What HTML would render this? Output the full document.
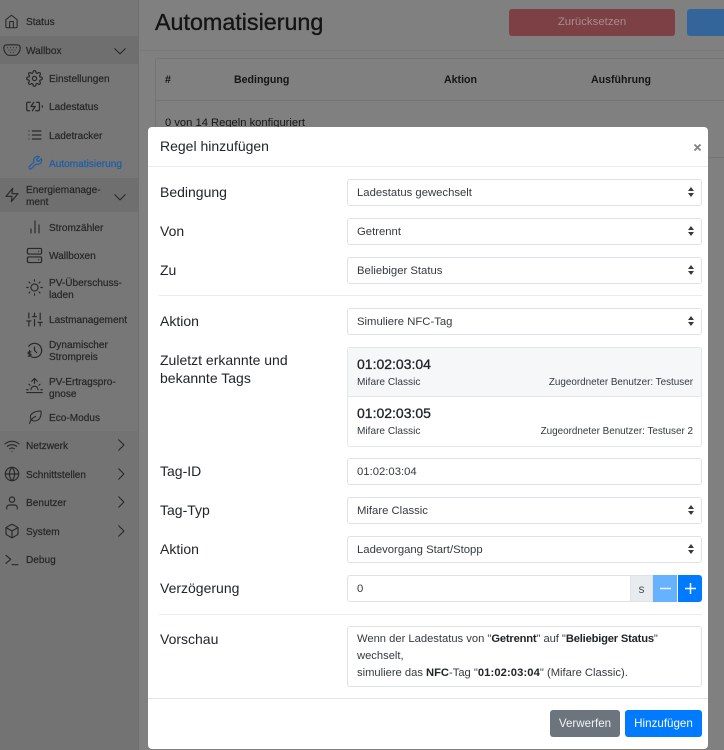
<!DOCTYPE html>
<html lang="de"><head><meta charset="utf-8"><title>Automatisierung</title>
<style>
*{box-sizing:border-box}
html,body{margin:0;padding:0;width:724px;height:750px;overflow:hidden;background:#808080;font-family:"Liberation Sans",sans-serif;color:#212529}
.a{position:absolute}
.t{position:absolute;white-space:nowrap}
#side{left:0;top:0;width:139px;height:750px;background:#777;border-right:1px solid #6e6e6e}
.g{position:absolute;left:0;width:138px;background:#6f6f6f}
.s{position:absolute;font-size:10.100px;line-height:12px;color:#262626;white-space:nowrap;-webkit-text-stroke:.2px #262626}
.m{left:26px}.n{left:49px}
svg.i{position:absolute;fill:none;stroke:#282828;stroke-width:1.700;stroke-linecap:round;stroke-linejoin:round}
svg.c{position:absolute;fill:none;stroke:#262626;stroke-width:1.800;stroke-linecap:round;stroke-linejoin:round}
#modal{left:148px;top:127px;width:560px;height:622px;background:#fff;border-radius:4px}
.l{position:absolute;left:160px;font-size:14px;line-height:18px;color:#212529;white-space:nowrap}
.f{position:absolute;left:347px;width:355px;height:27px;background:#fff;border:1px solid #dee2e6;border-radius:3px;font-size:11.300px;line-height:27px;padding-left:9px;color:#343a40;white-space:nowrap}
.f svg{position:absolute;right:7px;top:7px}
.hr{position:absolute;left:159px;width:543px;height:1px;background:#e9ecef}
.b{position:absolute;text-align:center;border-radius:3px;font-size:11.600px;color:#f2f2f2}
.p b{color:#212529}
</style></head><body>
<div class="a" id="side"></div>
<div class="g" style="top:36px;height:28px"></div>
<div class="g" style="top:178px;height:34px"></div>
<div class="g" style="top:431px;height:319px;background:#737373"></div>

<svg class="i" style="left:4px;top:14px" width="15" height="15" viewBox="0 0 24 24"><path d="M3 9l9-7 9 7v11a2 2 0 0 1-2 2H5a2 2 0 0 1-2-2z"/><path d="M9 22V12h6v10"/></svg>
<div class="s m" style="top:17px">Status</div>
<svg class="i" style="left:3px;top:43px;stroke-width:1.500" width="18" height="14" viewBox="0 0 24 18"><path d="M5 2h14c2 0 4 1.500 4 4 0 4-3 10-7 10H8C4 16 1 10 1 6c0-2.500 2-4 4-4z"/><path d="M6 6h.01M10 6h.01M14 6h.01M18 6h.01M8 9h.01M12 9h.01M16 9h.01M10 12h.01M14 12h.01"/></svg>
<div class="s m" style="top:46px">Wallbox</div>
<svg class="c" style="left:113px;top:44px" width="14" height="14" viewBox="0 0 24 24"><path d="M3 8l9 9 9-9"/></svg>

<svg class="i" style="left:26px;top:70px" width="17" height="17" viewBox="0 0 24 24"><circle cx="12" cy="12" r="3"/><path d="M19.400 15a1.650 1.650 0 0 0 .33 1.820l.06.06a2 2 0 1 1-2.830 2.830l-.06-.06a1.650 1.650 0 0 0-2.900 1.170V21a2 2 0 1 1-4 0v-.09A1.650 1.650 0 0 0 7.100 19.700l-.06.06a2 2 0 1 1-2.830-2.830l.06-.06a1.650 1.650 0 0 0-1.170-2.900H3a2 2 0 1 1 0-4h.09A1.650 1.650 0 0 0 4.300 7.100l-.06-.06a2 2 0 1 1 2.830-2.830l.06.06a1.650 1.650 0 0 0 2.900-1.170V3a2 2 0 1 1 4 0v.09a1.650 1.650 0 0 0 2.900 1.170l.06-.06a2 2 0 1 1 2.830 2.830l-.06.06a1.650 1.650 0 0 0 1.170 2.900H21a2 2 0 1 1 0 4h-.09a1.650 1.650 0 0 0-1.510 1z"/></svg>
<div class="s n" style="top:74px">Einstellungen</div>
<svg class="i" style="left:26px;top:98px" width="17" height="17" viewBox="0 0 24 24"><path d="M5 18H3a2 2 0 0 1-2-2V8a2 2 0 0 1 2-2h3.200M15 6h2a2 2 0 0 1 2 2v8a2 2 0 0 1-2 2h-3.200"/><path d="M23 13v-2"/><path d="M11 6l-4 6h6l-4 6"/></svg>
<div class="s n" style="top:102px">Ladestatus</div>
<svg class="i" style="left:27px;top:127px" width="16" height="16" viewBox="0 0 24 24"><path d="M8 6h13M8 12h13M8 18h13M3 6h.01M3 12h.01M3 18h.01"/></svg>
<div class="s n" style="top:131px">Ladetracker</div>
<svg class="i" style="left:27px;top:155px;stroke:#1c5ea6" width="16" height="16" viewBox="0 0 24 24"><path d="M14.700 6.300a1 1 0 0 0 0 1.400l1.600 1.600a1 1 0 0 0 1.400 0l3.770-3.770a6 6 0 0 1-7.940 7.940l-6.910 6.910a2.120 2.120 0 0 1-3-3l6.910-6.910a6 6 0 0 1 7.940-7.940l-3.760 3.760z"/></svg>
<div class="s n" style="top:159px;color:#1c5ea6;-webkit-text-stroke:.2px #1c5ea6">Automatisierung</div>

<svg class="i" style="left:4px;top:187px" width="16" height="16" viewBox="0 0 24 24"><path d="M13 2L3 14h9l-1 8 10-12h-9l1-8z"/></svg>
<div class="s m" style="top:185px">Energiemanage-<br>ment</div>
<svg class="c" style="left:113px;top:190px" width="14" height="14" viewBox="0 0 24 24"><path d="M3 8l9 9 9-9"/></svg>

<svg class="i" style="left:27px;top:219px" width="16" height="16" viewBox="0 0 24 24"><path d="M6 21v-6M12 21V3M18 21V9"/></svg>
<div class="s n" style="top:223px">Stromzähler</div>
<svg class="i" style="left:26px;top:247px" width="17" height="17" viewBox="0 0 24 24"><rect x="2" y="2" width="20" height="8" rx="2"/><rect x="2" y="14" width="20" height="8" rx="2"/><path d="M18 6h.01M18 18h.01"/></svg>
<div class="s n" style="top:251px">Wallboxen</div>
<svg class="i" style="left:26px;top:279px;stroke-width:1.600" width="17" height="17" viewBox="0 0 24 24"><circle cx="12" cy="12" r="5"/><path d="M12 1v2M12 21v2M4.220 4.220l1.420 1.420M18.360 18.360l1.420 1.420M1 12h2M21 12h2M4.220 19.780l1.420-1.420M18.360 5.640l1.420-1.420"/></svg>
<div class="s n" style="top:278px">PV-Überschuss-<br>laden</div>
<svg class="i" style="left:26px;top:311px" width="17" height="17" viewBox="0 0 24 24"><path d="M4 21v-7M4 10V3M12 21v-9M12 8V3M20 21v-5M20 12V3M1 14h6M9 8h6M17 16h6"/></svg>
<div class="s n" style="top:315px">Lastmanagement</div>
<svg class="i" style="left:26px;top:342px" width="17" height="17" viewBox="0 0 24 24"><path d="M4 6a10 10 0 1 1 4 15"/><path d="M12 7v5l3 3"/><path d="M5 12v8M7 14H4.500a1.500 1.500 0 0 0 0 3h1a1.500 1.500 0 0 1 0 3H3"/></svg>
<div class="s n" style="top:340px">Dynamischer<br>Strompreis</div>
<svg class="i" style="left:26px;top:377px;stroke-width:1.600" width="17" height="17" viewBox="0 0 24 24"><path d="M17 18a5 5 0 0 0-10 0M12 9V2M4.220 10.220l1.420 1.420M1 18h2M21 18h2M18.360 11.640l1.420-1.420M23 22H1M8 6l4-4 4 4"/></svg>
<div class="s n" style="top:377px">PV-Ertragspro-<br>gnose</div>
<svg class="i" style="left:27px;top:409px;stroke-width:1.600" width="16" height="16" viewBox="0 0 24 24"><path d="M4 22c0-4 4-9 9-11"/><path d="M21 3c1 9-3 15-10 15-3 0-6-2-6-6 0-6 8-9 16-9z"/></svg>
<div class="s n" style="top:413px">Eco-Modus</div>

<svg class="i" style="left:4px;top:438px" width="16" height="16" viewBox="0 0 24 24"><path d="M5 12.550a11 11 0 0 1 14.080 0M1.420 9a16 16 0 0 1 21.160 0M8.530 16.110a6 6 0 0 1 6.950 0M12 20h.01"/></svg>
<div class="s m" style="top:441px">Netzwerk</div>
<svg class="c" style="left:114px;top:438px" width="14" height="14" viewBox="0 0 24 24"><path d="M8 3l9 9-9 9"/></svg>
<svg class="i" style="left:4px;top:466px" width="16" height="16" viewBox="0 0 24 24"><circle cx="12" cy="12" r="10"/><path d="M2 12h20M12 2a15.300 15.300 0 0 1 4 10 15.300 15.300 0 0 1-4 10 15.300 15.300 0 0 1-4-10 15.300 15.300 0 0 1 4-10z"/></svg>
<div class="s m" style="top:470px">Schnittstellen</div>
<svg class="c" style="left:114px;top:467px" width="14" height="14" viewBox="0 0 24 24"><path d="M8 3l9 9-9 9"/></svg>
<svg class="i" style="left:4px;top:495px" width="16" height="16" viewBox="0 0 24 24"><path d="M20 21v-2a4 4 0 0 0-4-4H8a4 4 0 0 0-4 4v2"/><circle cx="12" cy="7" r="4"/></svg>
<div class="s m" style="top:498px">Benutzer</div>
<svg class="c" style="left:114px;top:495px" width="14" height="14" viewBox="0 0 24 24"><path d="M8 3l9 9-9 9"/></svg>
<svg class="i" style="left:4px;top:523px" width="16" height="16" viewBox="0 0 24 24"><path d="M21 16V8a2 2 0 0 0-1-1.730l-7-4a2 2 0 0 0-2 0l-7 4A2 2 0 0 0 3 8v8a2 2 0 0 0 1 1.730l7 4a2 2 0 0 0 2 0l7-4A2 2 0 0 0 21 16z"/><path d="M3.270 6.960L12 12.010l8.730-5.050M12 22.080V12"/></svg>
<div class="s m" style="top:527px">System</div>
<svg class="c" style="left:114px;top:524px" width="14" height="14" viewBox="0 0 24 24"><path d="M8 3l9 9-9 9"/></svg>
<svg class="i" style="left:4px;top:552px" width="16" height="16" viewBox="0 0 24 24"><path d="M3 17l7-6-7-6M12 19h9"/></svg>
<div class="s m" style="top:555px">Debug</div>

<div class="t" style="left:155px;top:8px;font-size:23.300px;line-height:28px;color:#141414;-webkit-text-stroke:.35px #141414">Automatisierung</div>
<div class="a" style="left:139px;top:50px;width:585px;height:1px;background:#797979"></div>
<div class="a" style="left:509px;top:9px;width:166px;height:27px;background:#7c4045;border-radius:3px;color:#a98c8e;font-size:11.400px;line-height:27px;text-align:center">Zurücksetzen</div>
<div class="a" style="left:687px;top:9px;width:50px;height:27px;background:#33659b;border-radius:3px"></div>
<div class="a" style="left:155px;top:58px;width:569px;height:100px;border:1px solid #747474;border-right:0;border-radius:3px 0 0 3px"></div>
<div class="a" style="left:155px;top:100px;width:569px;height:1px;background:#747474"></div>
<div class="t" style="left:165px;top:74px;font-size:10.600px;line-height:13px;font-weight:bold;color:#151515">#</div>
<div class="t" style="left:234px;top:74px;font-size:10.600px;line-height:13px;font-weight:bold;color:#151515">Bedingung</div>
<div class="t" style="left:444px;top:74px;font-size:10.600px;line-height:13px;font-weight:bold;color:#151515">Aktion</div>
<div class="t" style="left:591px;top:74px;font-size:10.600px;line-height:13px;font-weight:bold;color:#151515">Ausführung</div>
<div class="t" style="left:165px;top:117px;font-size:11.200px;line-height:13px;color:#151515">0 von 14 Regeln konfiguriert</div>

<div class="a" id="modal"></div>
<div class="t" style="left:160px;top:137px;font-size:14px;line-height:18px;color:#212529">Regel hinzufügen</div>
<svg class="a" style="left:693px;top:143px" width="9" height="9" viewBox="0 0 9 9"><path d="M1.500 1.500l6 6M7.500 1.500l-6 6" stroke="#858585" stroke-width="1.900" fill="none"/></svg>
<div class="a" style="left:148px;top:166px;width:560px;height:1px;background:#e9ecef"></div>

<div class="l" style="top:183px">Bedingung</div>
<div class="f" style="top:179px">Ladestatus gewechselt<svg width="6" height="10" viewBox="0 0 6 10"><path d="M3 0l3 4H0zM3 10l3-4H0z" fill="#343a40"/></svg></div>
<div class="l" style="top:222px">Von</div>
<div class="f" style="top:218px">Getrennt<svg width="6" height="10" viewBox="0 0 6 10"><path d="M3 0l3 4H0zM3 10l3-4H0z" fill="#343a40"/></svg></div>
<div class="l" style="top:261px">Zu</div>
<div class="f" style="top:257px">Beliebiger Status<svg width="6" height="10" viewBox="0 0 6 10"><path d="M3 0l3 4H0zM3 10l3-4H0z" fill="#343a40"/></svg></div>
<div class="hr" style="top:295px"></div>
<div class="l" style="top:312px">Aktion</div>
<div class="f" style="top:308px">Simuliere NFC-Tag<svg width="6" height="10" viewBox="0 0 6 10"><path d="M3 0l3 4H0zM3 10l3-4H0z" fill="#343a40"/></svg></div>
<div class="l" style="top:351px">Zuletzt erkannte und</div>
<div class="l" style="top:369px">bekannte Tags</div>

<div class="a" style="left:347px;top:347px;width:355px;height:100px;border:1px solid #e3e6ea;border-radius:3px;overflow:hidden">
  <div class="a" style="left:0;top:0;width:353px;height:49px;background:#f6f7f9;border-bottom:1px solid #e3e6ea"></div>
</div>
<div class="t" style="left:357px;top:356px;font-size:14px;line-height:17px;color:#212529;-webkit-text-stroke:.3px #212529">01:02:03:04</div>
<div class="t" style="left:357px;top:376px;font-size:10.100px;line-height:13px;color:#343a40">Mifare Classic</div>
<div class="t" style="right:31px;top:376px;font-size:9.900px;line-height:13px;color:#343a40">Zugeordneter Benutzer: Testuser</div>
<div class="t" style="left:357px;top:405px;font-size:14px;line-height:17px;color:#212529;-webkit-text-stroke:.3px #212529">01:02:03:05</div>
<div class="t" style="left:357px;top:425px;font-size:10.100px;line-height:13px;color:#343a40">Mifare Classic</div>
<div class="t" style="right:31px;top:425px;font-size:9.900px;line-height:13px;color:#343a40">Zugeordneter Benutzer: Testuser 2</div>

<div class="l" style="top:462px">Tag-ID</div>
<div class="f" style="top:458px">01:02:03:04</div>
<div class="l" style="top:501px">Tag-Typ</div>
<div class="f" style="top:497px">Mifare Classic<svg width="6" height="10" viewBox="0 0 6 10"><path d="M3 0l3 4H0zM3 10l3-4H0z" fill="#343a40"/></svg></div>
<div class="l" style="top:540px">Aktion</div>
<div class="f" style="top:536px">Ladevorgang Start/Stopp<svg width="6" height="10" viewBox="0 0 6 10"><path d="M3 0l3 4H0zM3 10l3-4H0z" fill="#343a40"/></svg></div>
<div class="l" style="top:579px">Verzögerung</div>
<div class="f" style="top:575px;width:284px;border-radius:3px 0 0 3px">0</div>
<div class="a" style="left:630px;top:575px;width:23px;height:27px;background:#e9ecef;border:1px solid #dee2e6;text-align:center;font-size:12px;line-height:26px;color:#495057">s</div>
<div class="a" style="left:653px;top:575px;width:24px;height:27px;background:#66b2ff"></div>
<div class="a" style="left:678px;top:575px;width:24px;height:27px;background:#007bff;border-radius:0 3px 3px 0"></div>
<svg class="a" style="left:659px;top:582px" width="13" height="13" viewBox="0 0 13 13"><path d="M1 6.500h11" stroke="#e8f3ff" stroke-width="1.500"/></svg>
<svg class="a" style="left:684px;top:582px" width="13" height="13" viewBox="0 0 13 13"><path d="M1 6.500h11M6.500 1v11" stroke="#fff" stroke-width="1.500"/></svg>
<div class="hr" style="top:614px"></div>
<div class="l" style="top:630px">Vorschau</div>
<div class="a" style="left:347px;top:626px;width:355px;height:61px;border:1px solid #dee2e6;border-radius:3px"></div>
<div class="t p" style="left:357px;top:631px;font-size:11.200px;line-height:17px;color:#343a40">Wenn der Ladestatus von "<b style="letter-spacing:-.2px">Getrennt</b>" <span style="letter-spacing:-.1px">auf</span> "<b style="letter-spacing:-.2px">Beliebiger Status</b>"<br>wechselt,<br>simuliere das <b>NFC</b>-Tag "<b style="letter-spacing:.1px">01:02:03:04</b>" (Mifare Classic).</div>
<div class="a" style="left:148px;top:698px;width:560px;height:1px;background:#e3e6ea"></div>
<div class="b" style="left:550px;top:710px;width:70px;height:27px;line-height:27px;background:#6c757d">Verwerfen</div>
<div class="b" style="left:625px;top:710px;width:77px;height:27px;line-height:27px;background:#007bff;color:#fff">Hinzufügen</div>
</body></html>
